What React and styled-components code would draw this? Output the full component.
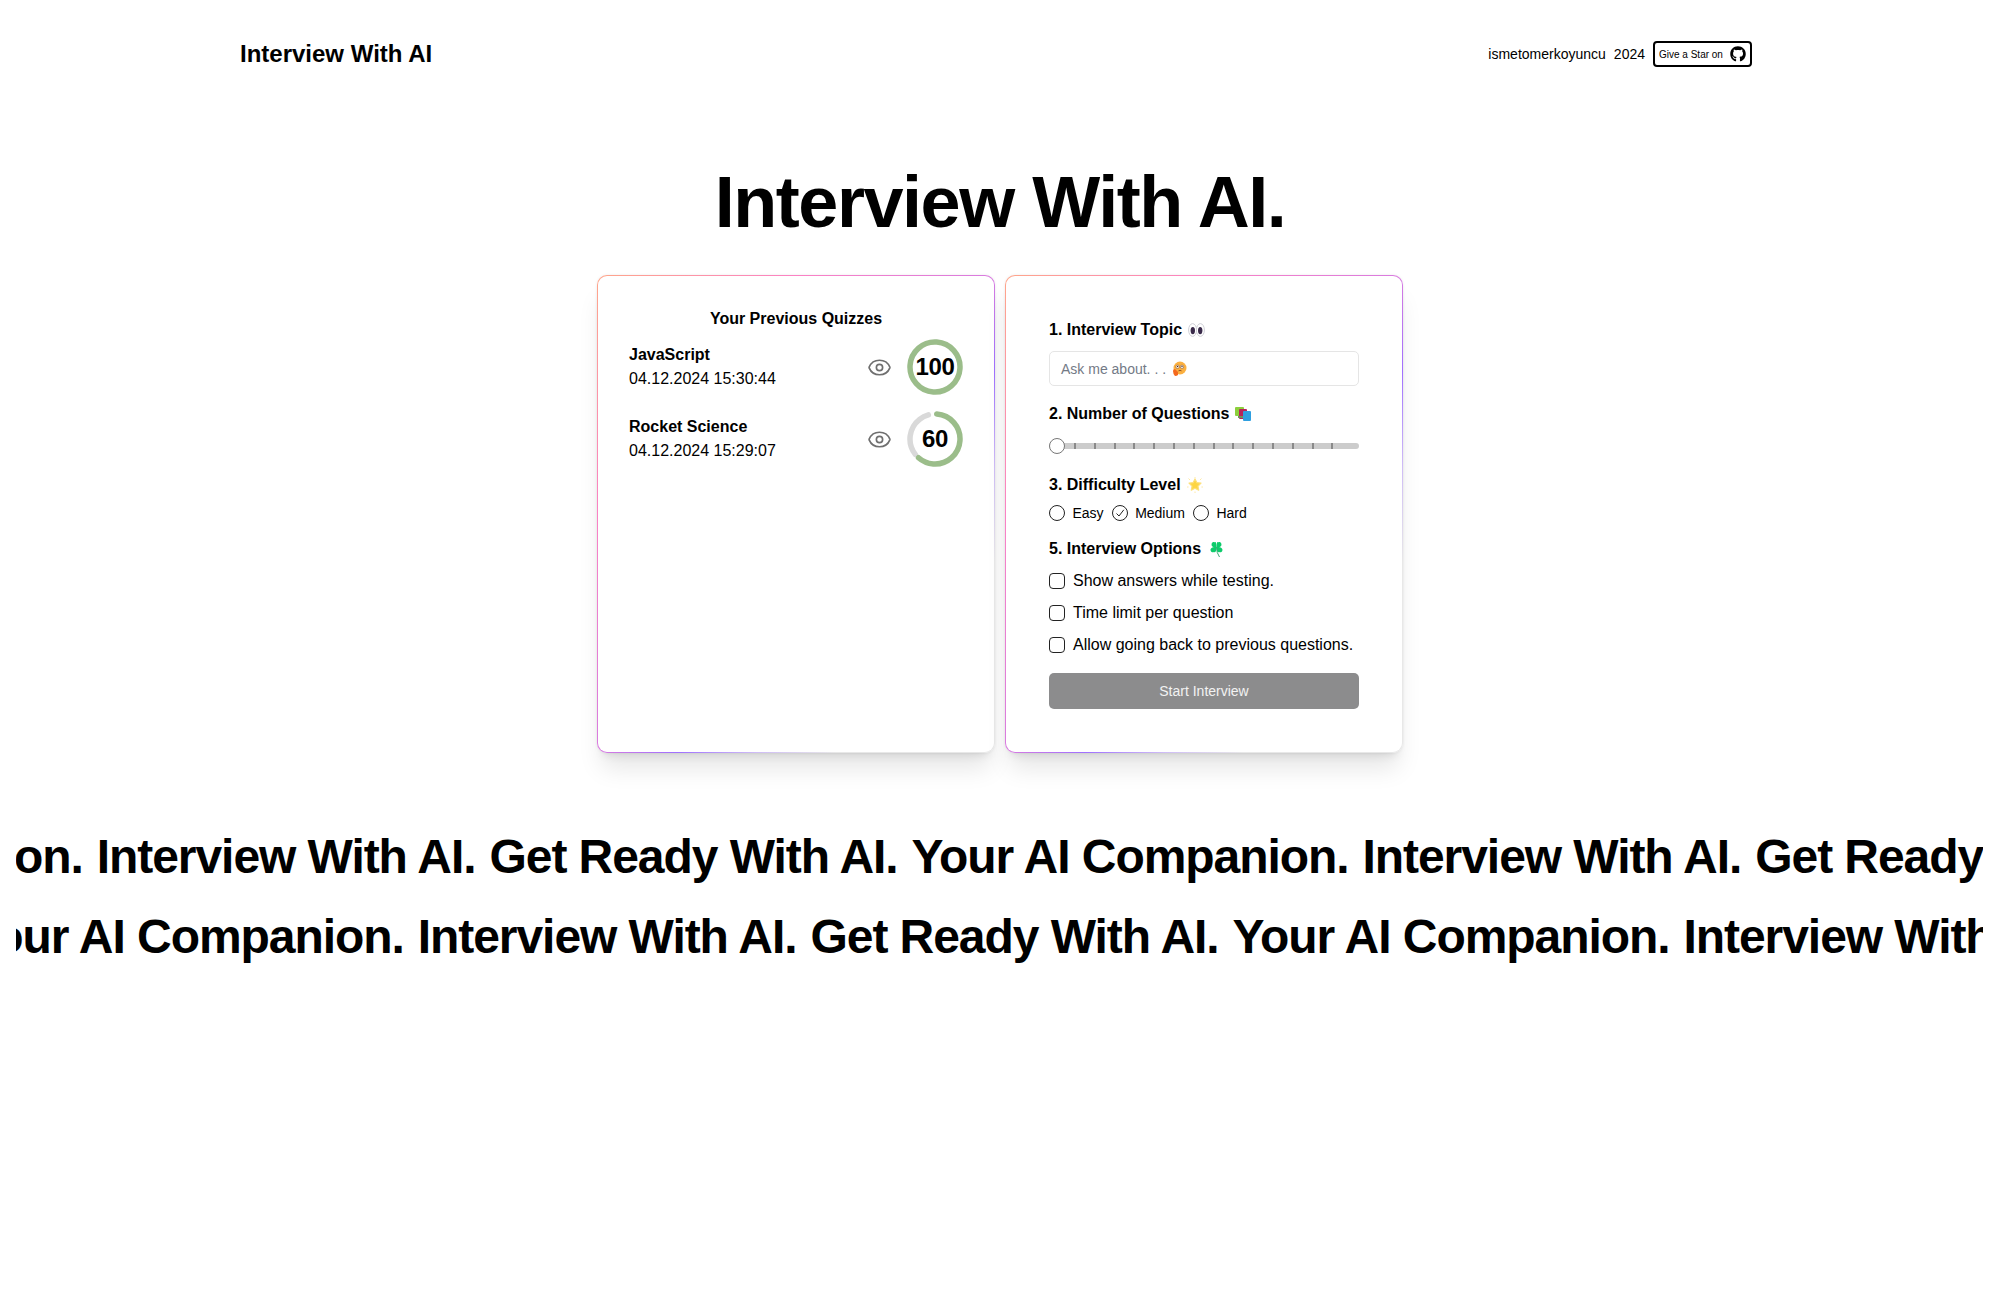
import React from "react";
import styled, { createGlobalStyle } from "styled-components";
import { Eye } from "lucide-react";
import { FaGithub } from "react-icons/fa";

const GlobalStyle = createGlobalStyle`
  * { box-sizing: border-box; }
  html, body { margin: 0; background: #fff; }
  body {
    font-family: "Liberation Sans", Arial, sans-serif;
    color: #000;
    overflow-x: hidden;
  }
`;

const Page = styled.div`
  min-height: 1300px;
  background: #fff;
`;

const Header = styled.header`
  display: flex;
  align-items: center;
  justify-content: space-between;
  height: 108px;
  padding: 0 245px 0 240px;
`;

const Brand = styled.div`
  font-size: 24px;
  font-weight: 700;
`;

const HeaderRight = styled.div`
  display: flex;
  align-items: center;
  font-size: 14px;
  gap: 8px;
`;

const StarButton = styled.a`
  display: flex;
  align-items: center;
  justify-content: space-between;
  width: 99px;
  height: 26px;
  padding: 0 4px 0 4px;
  border: 2px solid #000;
  border-radius: 4px;
  font-size: 10px;
  color: #000;
`;

const Hero = styled.h1`
  margin: 52px 0 0 3px;
  font-size: 72px;
  line-height: 84px;
  font-weight: 700;
  letter-spacing: -1.45px;
  text-align: center;
`;

const Cards = styled.div`
  display: flex;
  gap: 10px;
  justify-content: center;
  margin: 31px 0 0 3px;
`;

const Card = styled.section`
  width: 398px;
  height: 478px;
  border: 1px solid transparent;
  border-radius: 10px;
  background:
    linear-gradient(#fff, #fff) padding-box,
    linear-gradient(
        to bottom right,
        #ffa68a 0%,
        #fb82c4 25%,
        #d87be0 50%,
        #a070ff 60%,
        rgba(190, 160, 255, 0.6) 70%,
        rgba(190, 160, 255, 0) 80%
      )
      border-box,
    linear-gradient(#e8e8e8, #e8e8e8) border-box;
  box-shadow: 0 20px 25px -5px rgba(0, 0, 0, 0.1), 0 8px 10px -6px rgba(0, 0, 0, 0.1),
    0 0 3px rgba(0, 0, 0, 0.08);
`;

const HistoryCard = styled(Card)`
  padding: 33px 31px 0;
`;

const HistoryTitle = styled.h2`
  margin: 0 0 10px;
  font-size: 16px;
  line-height: 20px;
  font-weight: 700;
  text-align: center;
`;

const QuizRow = styled.div`
  display: flex;
  align-items: center;
  height: 56px;
  margin-bottom: 16px;
`;

const QuizText = styled.div`
  flex: 1;
  font-size: 16px;
  line-height: 24px;
`;

const QuizName = styled.div`
  font-weight: 700;
`;

const EyeIcon = styled(Eye)`
  color: #6f6f6f;
  margin-right: 15px;
`;

const Gauge = styled.div`
  position: relative;
  width: 56px;
  height: 56px;
`;

const GaugeValue = styled.div`
  position: absolute;
  inset: 0;
  display: flex;
  align-items: center;
  justify-content: center;
  font-size: 24px;
  font-weight: 700;
  letter-spacing: -0.3px;
`;

const FormCard = styled(Card)`
  display: flex;
  flex-direction: column;
  padding: 44px 43px 0 43px;
`;

const Label = styled.div`
  display: flex;
  align-items: center;
  gap: ${({ $gap }) => $gap || 6}px;
  height: 20px;
  margin-top: ${({ $top }) => $top || 0}px;
  font-size: 16px;
  font-weight: 700;
`;

const TopicInput = styled.div`
  display: flex;
  align-items: center;
  gap: 6px;
  height: 35px;
  margin-top: 11px;
  padding: 0 11px;
  border: 1px solid #e5e5e5;
  border-radius: 5px;
  font-size: 14px;
  color: #737a86;
`;

const Slider = styled.div`
  position: relative;
  display: flex;
  align-items: center;
  height: 16px;
  margin-top: 14px;
`;

const Track = styled.div`
  display: flex;
  align-items: center;
  gap: 17.8px;
  width: 100%;
  height: 6px;
  padding-left: 25px;
  border-radius: 3px;
  background: #cccccc;
`;

const Tick = styled.span`
  width: 2px;
  height: 6px;
  background: #8a8a8a;
`;

const Thumb = styled.span`
  position: absolute;
  left: 0;
  top: 0;
  width: 16px;
  height: 16px;
  border: 1px solid #777;
  border-radius: 50%;
  background: #fff;
`;

const RadioRow = styled.div`
  display: flex;
  align-items: center;
  height: 20px;
  margin-top: 8px;
  font-size: 14px;
`;

const RadioItem = styled.div`
  display: flex;
  align-items: center;
  gap: 7.5px;
  margin-right: 8px;
`;

const RadioDot = styled.span`
  display: flex;
  align-items: center;
  justify-content: center;
  width: 16px;
  height: 16px;
  border: 1px solid #222;
  border-radius: 50%;
`;

const CheckRow = styled.div`
  display: flex;
  align-items: center;
  gap: 8px;
  height: 20px;
  margin-top: 12px;
  font-size: 16px;
`;

const CheckBox = styled.span`
  width: 16px;
  height: 16px;
  border: 1px solid #222;
  border-radius: 4px;
`;

const StartButton = styled.button`
  height: 36px;
  margin-top: 18px;
  border: 0;
  border-radius: 5px;
  background: #8c8c8d;
  color: #f2f2f2;
  font-family: inherit;
  font-size: 14px;
`;

const Marquee = styled.div`
  margin: ${({ $top }) => $top}px 14px 0 16px;
  height: 56px;
  overflow: hidden;
`;

const MarqueeTrack = styled.div`
  display: flex;
  gap: 14px;
  width: max-content;
  margin-left: ${({ $offset }) => $offset}px;
  font-size: 48px;
  line-height: 56px;
  font-weight: 700;
  letter-spacing: -1.06px;
  white-space: nowrap;
`;

const EyesEmoji = () => (
  <svg width="17" height="14" viewBox="0 0 17 14">
    <ellipse cx="4.6" cy="7" rx="4" ry="6.4" fill="#fff" stroke="#cfcfd6" />
    <ellipse cx="12.4" cy="7" rx="4" ry="6.4" fill="#fff" stroke="#cfcfd6" />
    <ellipse cx="4.8" cy="7.6" rx="2.2" ry="3.6" fill="#3a2a4a" />
    <ellipse cx="12.2" cy="7.6" rx="2.2" ry="3.6" fill="#3a2a4a" />
  </svg>
);

const ThinkingEmoji = () => (
  <svg width="15" height="15" viewBox="0 0 15 15">
    <circle cx="8" cy="7" r="6.5" fill="#fbb040" />
    <circle cx="5.6" cy="5.8" r="1.7" fill="#fff" stroke="#7a4a2a" strokeWidth="0.5" />
    <circle cx="10" cy="5.8" r="1.7" fill="#fff" stroke="#7a4a2a" strokeWidth="0.5" />
    <circle cx="5.6" cy="5.5" r="0.7" fill="#4a2a1a" />
    <circle cx="10" cy="5.5" r="0.7" fill="#4a2a1a" />
    <path d="M6.5 9.8 q1.5 -1 3 0" stroke="#7a3a1a" strokeWidth="0.8" fill="none" />
    <path d="M1 10 q0 -2 2 -2 l3 3 v3 q-1 1 -3 1 q-2 -2 -2 -5z" fill="#f4691e" />
  </svg>
);

const BooksEmoji = () => (
  <svg width="17" height="15" viewBox="0 0 17 15">
    <rect x="0" y="0" width="9" height="9" rx="1" fill="#8ccf3c" />
    <rect x="4" y="2" width="8" height="10" rx="1" fill="#b8235a" />
    <rect x="8" y="4" width="8" height="10" rx="1" fill="#2f9fe0" />
    <rect x="3" y="9" width="5" height="2" fill="#6f8f5c" />
  </svg>
);

const StarEmoji = () => (
  <svg width="16" height="16" viewBox="0 0 16 16">
    <path
      d="M8 2 L9.8 5.6 L14 6.2 L11 9.2 L11.7 13.2 L8 11.3 L4.3 13.2 L5 9.2 L2 6.2 L6.2 5.6z"
      fill="#fdd542"
      stroke="#fde07a"
      strokeWidth="1.2"
      strokeLinejoin="round"
    />
    <path
      d="M8 0v1.4 M8 14.5v1.5 M1.5 1.5l1.5 1.5 M14.5 1.5l-1.5 1.5 M0 10h1.6 M14.4 10h1.6"
      stroke="#feeaa8"
      strokeWidth="1"
    />
  </svg>
);

const CloverEmoji = () => (
  <svg width="13" height="17" viewBox="0 0 13 17">
    <path d="M6.5 6 C3 6.5 1 5.5 1.6 3 C2 1 4 0.6 4.6 1.4 C5.6 0 6.5 2 6.5 6z" fill="#0ecb6b" />
    <path d="M6.5 6 C10 6.5 12 5.5 11.4 3 C11 1 9 0.6 8.4 1.4 C7.4 0 6.5 2 6.5 6z" fill="#0ecb6b" />
    <path d="M6.5 6 C3 5.5 0 7 0.6 9.4 C1.2 11.4 3.2 11.6 4 11 C5.2 12.2 6.5 10 6.5 6z" fill="#0ecb6b" />
    <path d="M6.5 6 C10 5.5 13 7 12.4 9.4 C11.8 11.4 9.8 11.6 9 11 C7.8 12.2 6.5 10 6.5 6z" fill="#0ecb6b" />
    <path d="M6.5 6 q0 6 3 10" stroke="#3aa874" strokeWidth="1" fill="none" />
  </svg>
);

const ScoreGauge = ({ value }) => {
  const r = 25;
  const c = 2 * Math.PI * r;
  const green = (c * value) / 100;
  return (
    <Gauge>
      <svg width="56" height="56" viewBox="0 0 56 56">
        {value < 100 && (
          <circle
            cx="28"
            cy="28"
            r={r}
            fill="none"
            stroke="#d9d9d9"
            strokeWidth="5.5"
            strokeLinecap="round"
            strokeDasharray={`${c - green - 14} ${c}`}
            transform={`rotate(${-90 + (value / 100) * 360 + 16} 28 28)`}
          />
        )}
        <circle
          cx="28"
          cy="28"
          r={r}
          fill="none"
          stroke="#9bbd8a"
          strokeWidth="5.5"
          strokeLinecap={value < 100 ? "round" : "butt"}
          strokeDasharray={value < 100 ? `${green} ${c}` : undefined}
          transform="rotate(-86 28 28)"
        />
      </svg>
      <GaugeValue>{value}</GaugeValue>
    </Gauge>
  );
};

const quizzes = [
  { name: "JavaScript", date: "04.12.2024 15:30:44", score: 100 },
  { name: "Rocket Science", date: "04.12.2024 15:29:07", score: 60 }
];

const phrases = [
  "Interview With AI.",
  "Get Ready With AI.",
  "Your AI Companion."
];

const MarqueeRow = ({ top, offset }) => (
  <Marquee $top={top}>
    <MarqueeTrack $offset={offset}>
      {[0, 1, 2].flatMap(n =>
        phrases.map(text => <span key={`${n}-${text}`}>{text}</span>)
      )}
    </MarqueeTrack>
  </Marquee>
);

const App = () => {
  return (
    <Page>
      <GlobalStyle />
      <Header>
        <Brand>Interview With AI</Brand>
        <HeaderRight>
          <span>ismetomerkoyuncu</span>
          <span>2024</span>
          <StarButton>
            Give a Star on
            <FaGithub size={16} />
          </StarButton>
        </HeaderRight>
      </Header>

      <Hero>Interview With AI.</Hero>

      <Cards>
        <HistoryCard>
          <HistoryTitle>Your Previous Quizzes</HistoryTitle>
          {quizzes.map(quiz => (
            <QuizRow key={quiz.name}>
              <QuizText>
                <QuizName>{quiz.name}</QuizName>
                <div>{quiz.date}</div>
              </QuizText>
              <EyeIcon size={25} strokeWidth={1.6} />
              <ScoreGauge value={quiz.score} />
            </QuizRow>
          ))}
        </HistoryCard>

        <FormCard>
          <Label>
            1. Interview Topic <EyesEmoji />
          </Label>
          <TopicInput>
            Ask me about. . . <ThinkingEmoji />
          </TopicInput>

          <Label $top={18}>
            2. Number of Questions <BooksEmoji />
          </Label>
          <Slider>
            <Track>
              {Array.from({ length: 14 }, (_, i) => (
                <Tick key={i} />
              ))}
            </Track>
            <Thumb />
          </Slider>

          <Label $top={21}>
            3. Difficulty Level <StarEmoji />
          </Label>
          <RadioRow>
            <RadioItem>
              <RadioDot />
              Easy
            </RadioItem>
            <RadioItem>
              <RadioDot>
                <svg width="10" height="10" viewBox="0 0 10 10">
                  <path d="M1.5 5.5 L4 8 L8.8 1.8" fill="none" stroke="#222" strokeWidth="1" />
                </svg>
              </RadioDot>
              Medium
            </RadioItem>
            <RadioItem>
              <RadioDot />
              Hard
            </RadioItem>
          </RadioRow>

          <Label $top={16} $gap={9}>
            5. Interview Options <CloverEmoji />
          </Label>
          <CheckRow>
            <CheckBox />
            Show answers while testing.
          </CheckRow>
          <CheckRow>
            <CheckBox />
            Time limit per question
          </CheckRow>
          <CheckRow>
            <CheckBox />
            Allow going back to previous questions.
          </CheckRow>

          <StartButton>Start Interview</StartButton>
        </FormCard>
      </Cards>

      <MarqueeRow top={76} offset={-1185} />
      <MarqueeRow top={24} offset={-864} />
    </Page>
  );
};

export default App;
